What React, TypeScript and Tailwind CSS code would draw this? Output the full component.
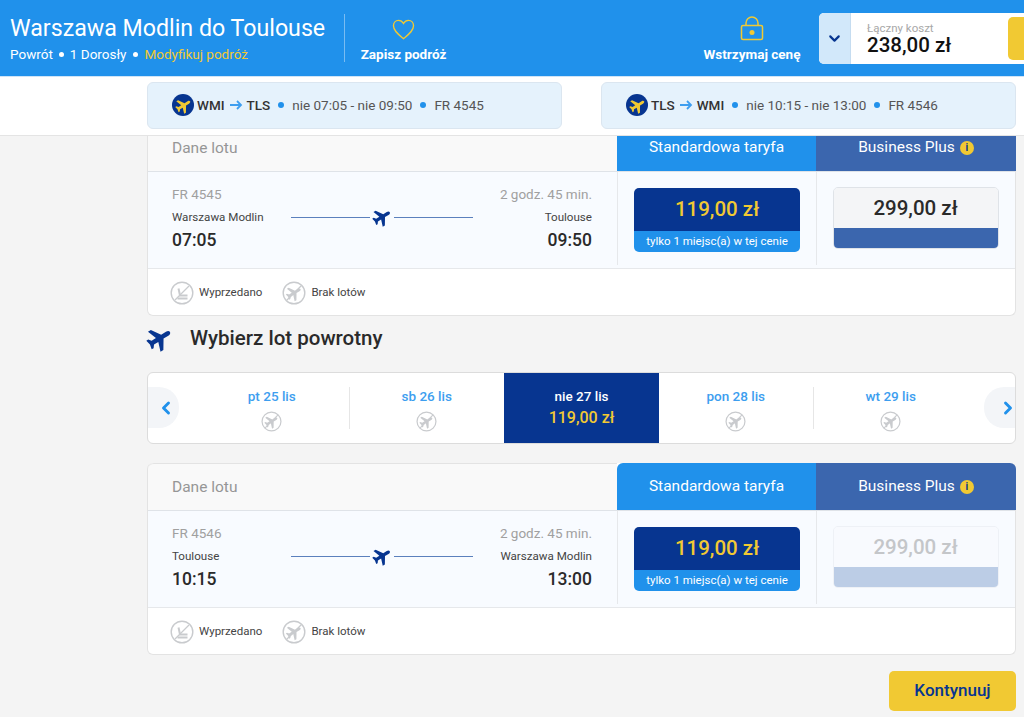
import {ChevronDown, ChevronLeft, ChevronRight} from "lucide-react";

const PLANE = "M12 1c1.200 0 2 1.400 2 3v5l8.500 5.500v3L14 14.500V19l2.500 2v2L12 22l-4.500 1v-2L10 19v-4.500L1.500 17.500v-3L10 9V4c0-1.600.8-3 2-3z";

const Plane = ({size, color}: {size: number; color: string}) => (
    <svg width={size} height={size} viewBox="0 0 24 24" fill={color} className="shrink-0">
        <path d={PLANE} transform="rotate(58 12 12)"/>
    </svg>
);

// grey round "no flight" mark
const NoFlight = ({size = 22}: {size?: number}) => (
    <svg width={size} height={size} viewBox="0 0 24 24" fill="none" className="shrink-0">
        <circle cx="12" cy="12" r="10.800" stroke="#c9cbce" strokeWidth="1.400" fill="#fff"/>
        <path d={PLANE} fill="#c9cbce" transform="rotate(58 12 12) translate(3.600 3.600) scale(.7)"/>
        <path d="M4.500 19.500 19.500 4.500" stroke="#c9cbce" strokeWidth="1.200"/>
    </svg>
);

const SoldOut = () => (
    <svg width={24} height={24} viewBox="0 0 24 24" fill="none" className="shrink-0">
        <circle cx="12" cy="12" r="10.800" stroke="#c9cbce" strokeWidth="1.400" fill="#fff"/>
        <path d="M8.500 7.500l1.500 7h7.500M7.500 17.500h10" stroke="#c9cbce" strokeWidth="2"/>
        <path d="M5 19 19 5" stroke="#c9cbce" strokeWidth="1.200"/>
    </svg>
);

const Info = () => (
    <span className="inline-flex w-[14px] h-[14px] rounded-full bg-[#f1c933] text-[#073590] text-[10px] font-bold items-center justify-center leading-none">i</span>
);

const Summary = ({from, to, times, code}: {from: string; to: string; times: string; code: string}) => (
    <div className="w-[415px] h-[47px] rounded-[6px] bg-[#e5f2fc] border border-[#dbe6f0] flex items-center pl-[24px] pb-[1px] text-[13.500px] text-[#555]">
        <span className="w-[22px] h-[22px] rounded-full bg-[#073590] flex items-center justify-center mr-[3px]">
            <Plane size={17} color="#f1c933"/>
        </span>
        <span className="font-medium text-[#333]">{from}</span>
        <svg width="14" height="12" viewBox="0 0 14 12" fill="none" className="mx-[4px]">
            <path d="M1 6h11M8 2l4 4-4 4" stroke="#3d9eef" strokeWidth="1.800"/>
        </svg>
        <span className="font-medium text-[#333]">{to}</span>
        <span className="w-[6px] h-[6px] rounded-full bg-[#2091eb] ml-[8px] mr-[8px]"/>
        <span>{times}</span>
        <span className="w-[6px] h-[6px] rounded-full bg-[#2091eb] mx-[8px]"/>
        <span>{code}</span>
    </div>
);

const FlightCard = ({code, from, to, dep, arr, businessOff, className}: {
    code: string; from: string; to: string; dep: string; arr: string; businessOff?: boolean; className?: string;
}) => (
    <div className={`w-[869px] bg-white rounded-[6px] border border-[#e3e3e3] border-t-0 ${className ?? ""}`}>
        {/* header */}
        <div className="flex h-[48px] border-b border-[#dfe3e8]">
            <div className="w-[469px] bg-[#f9f9f9] rounded-tl-[6px] pl-[24px] pt-px flex items-center text-[15.500px] text-[#969696] border-t border-[#e3e3e3]">Dane lotu</div>
            <div className="w-[199px] bg-[#2091eb] rounded-tl-[6px] pt-px flex items-center justify-center text-[15.500px] text-white">Standardowa taryfa</div>
            <div className="w-[200px] -mr-px bg-[#3b66ae] rounded-tr-[6px] pt-px flex items-center justify-center gap-[5px] text-[15.500px] text-white">
                Business Plus <Info/>
            </div>
        </div>
        {/* body */}
        <div className="flex h-[97px] bg-[#f8fbff] border-b border-[#e6e8eb]">
            <div className="w-[469px] pl-[24px] pr-[25px] pt-[14px]">
                <div className="flex justify-between text-[13.500px] leading-[16px] text-[#a0a0a0]">
                    <span>{code}</span><span>2 godz. 45 min.</span>
                </div>
                <div className="flex items-center justify-between mt-[5px] text-[11.600px] leading-[16px] text-[#444]">
                    <span className="w-[119px]">{from}</span>
                    <span className="flex items-center gap-[2px]">
                        <span className="w-[79px] h-px bg-[#5b80bd]"/>
                        <Plane size={20} color="#073590"/>
                        <span className="w-[79px] h-px bg-[#5b80bd]"/>
                    </span>
                    <span className="w-[119px] text-right">{to}</span>
                </div>
                <div className="flex justify-between mt-[3px] text-[17.500px] leading-[20px] font-medium text-[#2a2a2a]">
                    <span>{dep}</span><span>{arr}</span>
                </div>
            </div>
            <div className="w-[199px] border-l border-[#e6e8eb] mb-[3px] pl-[16px] pt-[16px]">
                <div className="w-[166px] h-[64px] rounded-[5px] overflow-hidden flex flex-col">
                    <div className="flex-1 bg-[#073590] text-[#f1c933] text-[20.500px] font-medium flex items-center justify-center">119,00 zł</div>
                    <div className="h-[21px] bg-[#2091eb] text-white text-[11.500px] flex items-center justify-center">tylko 1 miejsc(a) w tej cenie</div>
                </div>
            </div>
            <div className="w-[200px] border-l border-[#e6e8eb] mb-[3px] pl-[16px] pt-[15px]">
                <div className={`w-[166px] h-[62px] rounded-[5px] overflow-hidden flex flex-col border ${businessOff ? "border-[#eef1f6]" : "border-[#dfe3e8]"}`}>
                    <div className={`flex-1 text-[20.500px] font-medium flex items-center justify-center ${businessOff ? "bg-[#f8fafe] text-[#c4c6c9]" : "bg-[#f4f5f7] text-[#2a2a2a]"}`}>299,00 zł</div>
                    <div className={`h-[20px] ${businessOff ? "bg-[#bccde6]" : "bg-[#3b66ae]"}`}/>
                </div>
            </div>
        </div>
        {/* legend */}
        <div className="h-[46px] flex items-center pl-[22px] pt-px text-[11.500px] text-[#444]">
            <SoldOut/>
            <span className="ml-[5px]">Wyprzedano</span>
            <span className="ml-[20px]"><NoFlight size={24}/></span>
            <span className="ml-[5px]">Brak lotów</span>
        </div>
    </div>
);

const days = ["pt 25 lis", "sb 26 lis", "nie 27 lis", "pon 28 lis", "wt 29 lis"];

const App = () => {
    return (
        <div className="w-[1024px] h-[717px] overflow-hidden flex flex-col bg-[#f4f4f4] font-['Roboto',sans-serif]">
            {/* top bar */}
            <header className="h-[77px] shrink-0 bg-[#2091eb] border-b border-[#cfe4f7] flex items-start overflow-hidden">
                <div className="w-[345px] shrink-0 h-[48px] mt-[14px] pl-[10px] border-r border-[#79bcf2]">
                    <h1 className="text-[23.200px] leading-[28px] text-white whitespace-nowrap">Warszawa Modlin do Toulouse</h1>
                    <p className="text-[13.500px] leading-[16px] mt-[4px] text-white flex items-center">
                        Powrót
                        <span className="w-[5px] h-[5px] rounded-full bg-white mx-[6px]"/>
                        1 Dorosły
                        <span className="w-[5px] h-[5px] rounded-full bg-white mx-[6px]"/>
                        <span className="text-[#f1c933] ml-[1px]">Modyfikuj podróż</span>
                    </p>
                </div>
                <div className="w-[117px] shrink-0 mt-[19px] flex flex-col items-center text-white text-[13.500px] font-bold leading-[16px]">
                    <svg width="23" height="21" viewBox="0 0 25 23" fill="none">
                        <path d="M12.500 21.500C7 17 1.500 13 1.500 7.500 1.500 4 4 1.500 7 1.500c2.400 0 4.300 1.300 5.500 3.400C13.700 2.800 15.600 1.500 18 1.500c3 0 5.500 2.500 5.500 6 0 5.500-5.500 9.500-11 14z" stroke="#f1c933" strokeWidth="1.500"/>
                    </svg>
                    <span className="mt-[6px]">Zapisz podróż</span>
                </div>
                <div className="w-[118px] shrink-0 ml-[231px] mt-[16px] flex flex-col items-center text-white text-[13.500px] font-bold leading-[16px]">
                    <svg width="24" height="25" viewBox="0 0 24 25" fill="none">
                        <path d="M6 9.500V7a6 6 0 0 1 12 0v2.500" stroke="#f1c933" strokeWidth="1.500"/>
                        <rect x="1.500" y="9.500" width="21" height="14" rx="1.500" stroke="#f1c933" strokeWidth="1.500"/>
                        <circle cx="12" cy="16.500" r="2.500" fill="#f1c933"/>
                    </svg>
                    <span className="mt-[5px]">Wstrzymaj cenę</span>
                </div>
                <div className="ml-[8px] mt-[13px] w-[220px] shrink-0 h-[51px] rounded-[5px] bg-white flex overflow-hidden">
                    <div className="w-[32px] bg-[#d2e8fa] flex items-center justify-center border-r border-[#c5dcf0]">
                        <ChevronDown size={17} color="#073590" strokeWidth={3}/>
                    </div>
                    <div className="w-[157px] pl-[16px] pt-[9px]">
                        <div className="text-[11.500px] leading-[12px] text-[#a8a8a8]">Łączny koszt</div>
                        <div className="text-[20.500px] leading-[22px] font-medium text-[#111]">238,00 zł</div>
                    </div>
                    <div className="w-[30px] h-[43px] mt-[4px] rounded-[5px] bg-[#f1c933]"/>
                </div>
            </header>

            {/* flight summaries */}
            <div className="h-[59px] shrink-0 bg-white border-b border-[#e4e4e4] flex items-start pt-[5px] pl-[147px] gap-[39px]">
                <Summary from="WMI" to="TLS" times="nie 07:05 - nie 09:50" code="FR 4545"/>
                <Summary from="TLS" to="WMI" times="nie 10:15 - nie 13:00" code="FR 4546"/>
            </div>

            <main className="flex-1 overflow-hidden pl-[147px]">
                {/* outbound card, page is scrolled so its top is cut */}
                <FlightCard className="-mt-[12px]" code="FR 4545" from="Warszawa Modlin" to="Toulouse" dep="07:05" arr="09:50"/>

                <div className="flex items-center h-[56px] pb-[12px] -ml-[1px]">
                    <Plane size={27} color="#073590"/>
                    <h2 className="ml-[17px] text-[20.500px] font-medium text-[#2a2a2a]">Wybierz lot powrotny</h2>
                </div>

                {/* date carousel */}
                <div className="relative w-[869px] h-[72px] bg-white border border-[#dcdcdc] rounded-[6px] flex pl-[47px] overflow-hidden">
                    <div className="absolute left-0 top-[14px] w-[31px] h-[41px] bg-[#f3f5f8] rounded-r-[20px] flex items-center justify-end pr-[3px]">
                        <ChevronLeft size={20} color="#2091eb" strokeWidth={3.500}/>
                    </div>
                    {days.map((day, i) => (
                        i === 2 ? (
                            <div key={day} className="w-[155px] bg-[#073590] flex flex-col items-center pt-[14px] text-[13.500px] font-medium">
                                <span className="text-white leading-[18px]">{day}</span>
                                <span className="text-[#f1c933] text-[16px] leading-[18px] mt-[4px]">119,00 zł</span>
                            </div>
                        ) : (
                            <div key={day} className="w-[154.500px] flex my-[14px]">
                                <div className={`flex-1 flex flex-col items-center text-[13.500px] font-medium text-[#3d9eef] leading-[18px] ${i === 0 || i === 3 ? "border-r border-[#e6e6e6]" : ""}`}>
                                    {day}
                                    <span className="mt-[6px]"><NoFlight size={21}/></span>
                                </div>
                            </div>
                        )
                    ))}
                    <div className="absolute right-0 top-[14px] w-[31px] h-[41px] bg-[#f3f5f8] rounded-l-[20px] flex items-center justify-end">
                        <ChevronRight size={20} color="#2091eb" strokeWidth={3.500} className="-mr-[3px]"/>
                    </div>
                </div>

                <FlightCard className="mt-[19px]" businessOff code="FR 4546" from="Toulouse" to="Warszawa Modlin" dep="10:15" arr="13:00"/>

                <div className="w-[869px] flex justify-end mt-[16px]">
                    <button className="w-[127px] h-[40px] rounded-[5px] bg-[#f1c933] text-[#073590] text-[17px] font-medium">Kontynuuj</button>
                </div>
            </main>
        </div>
    );
};

export default App;
